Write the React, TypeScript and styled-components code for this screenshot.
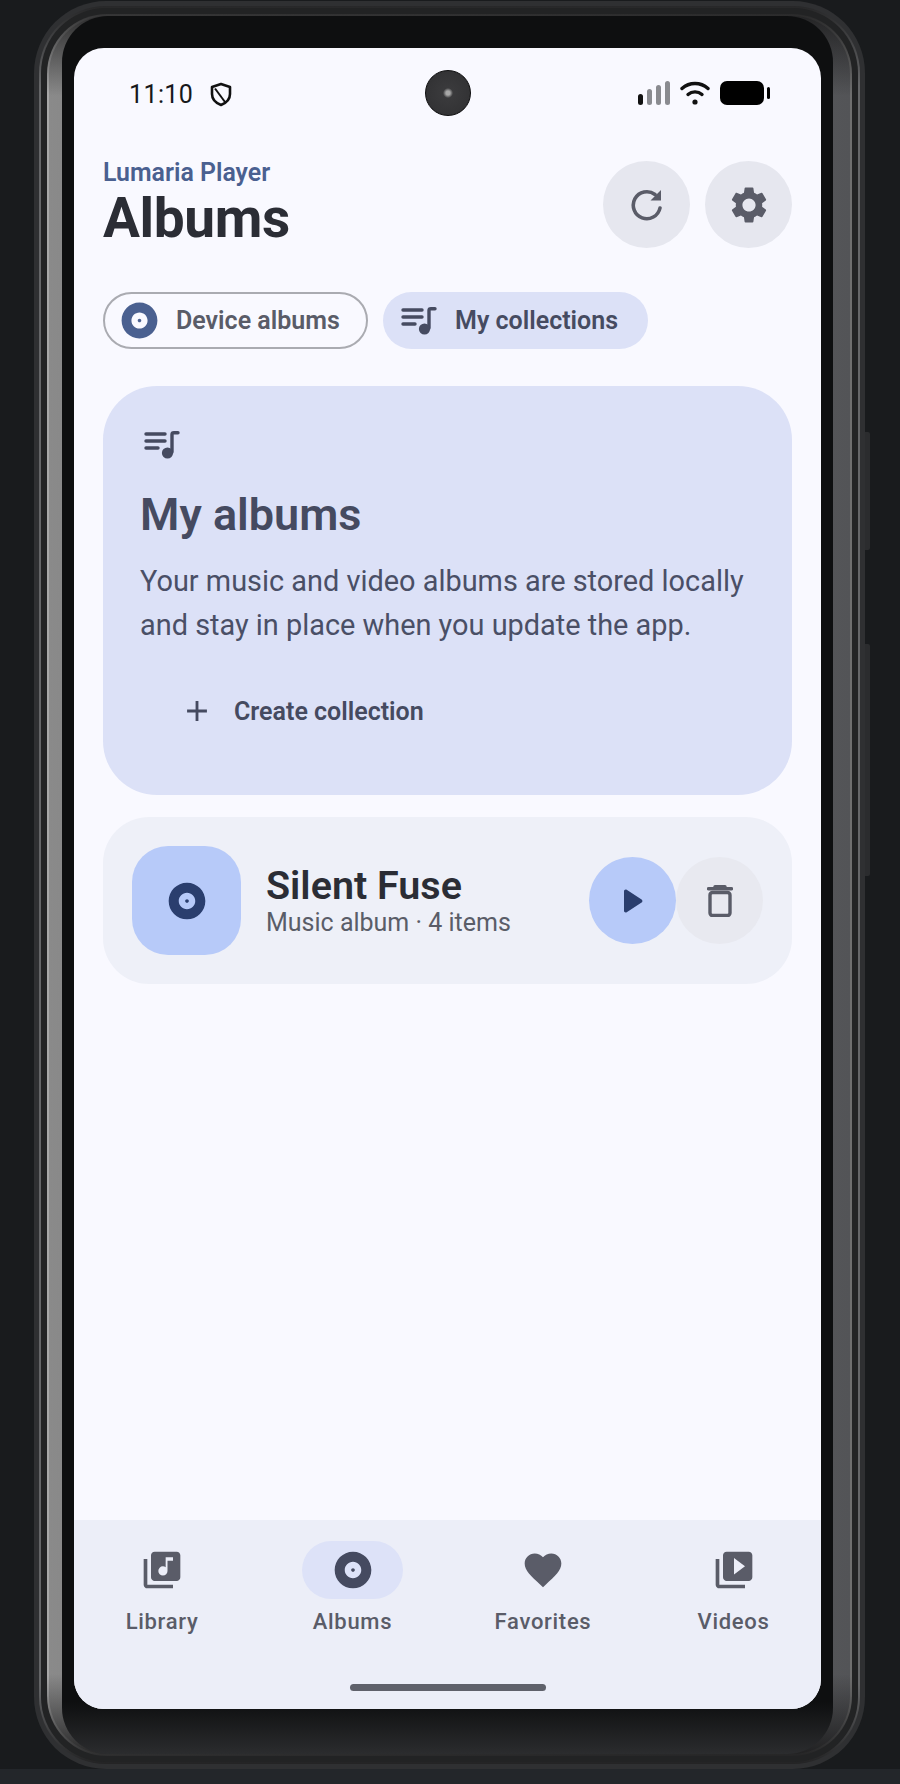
import React from "react";
import styled, { createGlobalStyle } from "styled-components";
import {
  MdAdd,
  MdAlbum,
  MdFavorite,
  MdLibraryMusic,
  MdSettings,
  MdVideoLibrary,
} from "react-icons/md";

const GlobalStyle = createGlobalStyle`
  html, body {
    margin: 0;
    padding: 0;
    background: #191b1d;
  }
  * {
    box-sizing: border-box;
  }
`;

// darkens the metal bands towards the top and bottom of the phone
const bandShade = `linear-gradient(
  to bottom,
  rgba(24, 24, 25, 0.8) 0,
  rgba(24, 24, 25, 0) 80px,
  rgba(24, 24, 25, 0) calc(100% - 80px),
  rgba(24, 24, 25, 0.85) 100%
)`;

const Stage = styled.div`
  width: 900px;
  height: 1784px;
  padding: 1px 35px 0 34px;
  overflow: hidden;
  font-family: Roboto, "Liberation Sans", sans-serif;
  background: linear-gradient(to bottom, #191b1d 1769px, #23262a 1769px);
`;

const Shell = styled.div`
  position: relative;
  width: 831px;
  height: 1768px;
  padding: 5px;
  border-radius: 72px;
  background: #2f3032;
`;

const SideKey = styled.span<{ $top: number; $height: number }>`
  position: absolute;
  right: -5px;
  top: ${({ $top }) => $top}px;
  width: 5px;
  height: ${({ $height }) => $height}px;
  border-radius: 0 2px 2px 0;
  background: #2b2c2e;
`;

const Rim = styled.div`
  height: 100%;
  padding: 2px;
  border-radius: 67px;
  background: ${bandShade}, #656668;
`;

const Gap = styled.div`
  height: 100%;
  padding: 6px;
  border-radius: 65px;
  background: #222324;
`;

const Edge = styled.div`
  height: 100%;
  padding: 2px;
  border-radius: 60px;
  background: ${bandShade}, linear-gradient(to right, #a8a8a8, #6e6e6e);
`;

const Bezel = styled.div`
  height: 100%;
  padding: 0 17px 0 13px;
  border-radius: 58px;
  background: ${bandShade}, linear-gradient(to right, #8a8a8a, #6a6a6a 50%, #535457);
`;

const Glass = styled.div`
  height: 100%;
  padding: 32px 12px 45px;
  border-radius: 46px;
  background: linear-gradient(to bottom, #0e0f10 97%, #2b2c2e);
`;

const Screen = styled.div`
  position: relative;
  display: flex;
  flex-direction: column;
  height: 100%;
  border-radius: 30px;
  overflow: hidden;
  background: #f9f9ff;
`;

const StatusBar = styled.div`
  display: flex;
  align-items: center;
  justify-content: space-between;
  height: 90px;
  padding: 0 51px 0 55px;
  color: #111;
`;

const StatusGroup = styled.div<{ $gap: number; $drop?: number }>`
  display: flex;
  align-items: center;
  gap: ${({ $gap }) => $gap}px;
  margin-top: ${({ $drop }) => $drop ?? 0}px;
`;

const Clock = styled.span`
  font-size: 25px;
  line-height: 30px;
  letter-spacing: 0.4px;
  color: #17181b;
`;

const Camera = styled.div`
  position: absolute;
  left: 351px;
  top: 22px;
  width: 46px;
  height: 46px;
  border-radius: 50%;
  border: 1.5px solid #0b0b0c;
  background: radial-gradient(circle at 50% 50%, #a8a8a8 0 2px, #3a3a3c 5px, #2f2f31 100%);
`;

const Content = styled.main`
  flex: 1;
  padding: 23px 29px 0;
`;

const Header = styled.header`
  display: flex;
  justify-content: space-between;
  align-items: flex-start;
`;

const TitleBlock = styled.div`
  display: flex;
  flex-direction: column;
`;

const Brand = styled.span`
  margin-bottom: 4px;
  font-size: 24.9px;
  font-weight: 600;
  line-height: 24px;
  color: #4a6090;
`;

const Title = styled.h1`
  margin: 0;
  font-size: 55px;
  font-weight: 700;
  line-height: 59px;
  letter-spacing: -0.4px;
  color: #2b2d35;
`;

const HeaderActions = styled.div`
  display: flex;
  gap: 15px;
`;

const RoundButton = styled.button<{ $tone: string }>`
  display: flex;
  align-items: center;
  justify-content: center;
  flex: none;
  width: 87px;
  height: 87px;
  padding: 0;
  border: none;
  border-radius: 50%;
  background: ${({ $tone }) => $tone};
  color: #5a5c68;
`;

const Tabs = styled.div`
  display: flex;
  gap: 15px;
  margin-top: 44px;
`;

const Tab = styled.button<{ $selected?: boolean }>`
  display: flex;
  align-items: center;
  gap: ${({ $selected }) => ($selected ? 18 : 15)}px;
  width: 265px;
  height: 57px;
  padding: 0 0 0 ${({ $selected }) => ($selected ? 18 : 13)}px;
  border-radius: 28.5px;
  border: ${({ $selected }) => ($selected ? "none" : "2px solid #aaabb1")};
  background: ${({ $selected }) => ($selected ? "#dce1f7" : "transparent")};
  color: ${({ $selected }) => ($selected ? "#464b61" : "#5a5c68")};
  font-family: inherit;
  font-size: 25px;
  font-weight: 600;
`;

const Hero = styled.section`
  display: flex;
  flex-direction: column;
  height: 409px;
  margin-top: 37px;
  padding: 45px 37px 0;
  border-radius: 54px;
  background: #dce1f7;
  color: #454a60;
`;

const HeroIcon = styled.span`
  display: flex;
  margin-left: 4px;
`;

const HeroTitle = styled.h2`
  margin: 28px 0 0;
  font-size: 45px;
  font-weight: 600;
  line-height: 56px;
  color: #454a60;
`;

const HeroText = styled.p`
  margin: 16px 0 0;
  font-size: 28.9px;
  font-weight: 400;
  line-height: 44px;
  color: #4a4f66;
`;

const CreateButton = styled.button`
  display: flex;
  align-items: center;
  gap: 20px;
  margin-top: 42px;
  padding: 0 0 0 40px;
  height: 44px;
  border: none;
  background: none;
  color: #454a60;
  font-family: inherit;
  font-size: 25px;
  font-weight: 600;
`;

const AlbumCard = styled.article`
  display: flex;
  align-items: center;
  height: 167px;
  margin-top: 22px;
  padding: 0 29px;
  border-radius: 46px;
  background: #eef0f8;
`;

const AlbumArt = styled.div`
  display: flex;
  align-items: center;
  justify-content: center;
  flex: none;
  width: 109px;
  height: 109px;
  border-radius: 36px;
  background: #b7caf9;
  color: #2a3e6e;
`;

const AlbumInfo = styled.div`
  display: flex;
  flex: 1;
  flex-direction: column;
  margin-left: 25px;
`;

const AlbumName = styled.span`
  font-size: 39.5px;
  font-weight: 600;
  line-height: 44px;
  color: #2b2d35;
`;

const AlbumMeta = styled.span`
  font-size: 25px;
  line-height: 30px;
  color: #5a5d68;
`;

const BottomNav = styled.nav`
  display: flex;
  flex-direction: column;
  height: 189px;
  background: #eceef8;
`;

const NavRow = styled.div`
  display: flex;
  gap: 30.5px;
  padding: 21px 0 0 8px;
`;

const NavItem = styled.a`
  display: flex;
  flex-direction: column;
  align-items: center;
  width: 160px;
  color: #5a5c68;
`;

const NavIcon = styled.span<{ $active?: boolean }>`
  display: flex;
  align-items: center;
  justify-content: center;
  width: 101px;
  height: 58px;
  border-radius: 29px;
  background: ${({ $active }) => ($active ? "#dde2f8" : "transparent")};
  color: ${({ $active }) => ($active ? "#454a60" : "#5a5c68")};
`;

const NavLabel = styled.span`
  margin-top: 8px;
  font-size: 22px;
  font-weight: 500;
  line-height: 30px;
  letter-spacing: 0.7px;
`;

const HomeBar = styled.div`
  align-self: center;
  width: 196px;
  height: 7px;
  margin-top: 47px;
  border-radius: 4px;
  background: #5f616b;
`;

const ShieldIcon = () => (
  <svg width="22" height="25" viewBox="0 0 22 25" fill="none" stroke="#111" strokeWidth="2.6" strokeLinejoin="round">
    <path d="M11 2 L20 5 V12 C20 17.5 16 21 11 23 C6 21 2 17.5 2 12 V5 Z" />
    <path d="M5 6.5 L15 20" strokeWidth="2" />
  </svg>
);

const SignalIcon = () => (
  <svg width="32" height="24" viewBox="0 0 32 24">
    <rect x="0" y="13" width="5" height="11" rx="2.5" fill="#111" />
    <rect x="9" y="8" width="5" height="16" rx="2.5" fill="#8a8b90" />
    <rect x="18" y="4" width="5" height="20" rx="2.5" fill="#8a8b90" />
    <rect x="27" y="0" width="5" height="24" rx="2.5" fill="#8a8b90" />
  </svg>
);

const WifiIcon = () => (
  <svg width="30" height="24" viewBox="0 0 30 24" fill="none" stroke="#111" strokeWidth="3.4" strokeLinecap="round">
    <path d="M2 7.5 C9.5 0.8 20.5 0.8 28 7.5" />
    <path d="M8 13.5 C12 10 18 10 22 13.5" />
    <circle cx="15" cy="21" r="2.6" fill="#111" stroke="none" />
  </svg>
);

const BatteryIcon = () => (
  <svg width="50" height="24" viewBox="0 0 50 24">
    <rect x="0" y="0" width="44" height="24" rx="7" fill="#000" />
    <rect x="47" y="6" width="3" height="12" rx="1.5" fill="#000" />
  </svg>
);

const RefreshIcon = () => (
  <svg width="34" height="34" viewBox="0 0 34 34" fill="none" stroke="currentColor" strokeWidth="3.6" strokeLinecap="round">
    <path d="M30 20 A13.5 13.5 0 1 1 25 6.5" />
    <path d="M31 2 V12.5 H20.5 Z" fill="currentColor" stroke="none" />
  </svg>
);

const QueueMusicIcon = () => (
  <svg width="36" height="28" viewBox="0 0 36 28" fill="none" stroke="currentColor" strokeWidth="3.4" strokeLinecap="round">
    <path d="M2 3 H21" />
    <path d="M2 10 H21" />
    <path d="M2 17 H14" />
    <path d="M28 21 V3.5 C28 2.5 29 1.8 30 1.8 H34" strokeWidth="3.4" />
    <circle cx="23.5" cy="22" r="5.6" fill="currentColor" stroke="none" />
  </svg>
);

const PlayIcon = () => (
  <svg width="20" height="24" viewBox="0 0 20 24" fill="#2a3e6e">
    <path d="M1 2.2 C1 0.8 2.5 0 3.7 0.8 L18.6 10.4 C19.7 11.1 19.7 12.9 18.6 13.6 L3.7 23.2 C2.5 24 1 23.2 1 21.8 Z" />
  </svg>
);

const TrashIcon = () => (
  <svg width="26" height="32" viewBox="0 0 26 32" fill="none" stroke="#5a5c68" strokeWidth="3.4" strokeLinecap="round" strokeLinejoin="round">
    <rect x="3" y="7.5" width="20" height="23" rx="2.5" />
    <path d="M1.5 3.8 H24.5" />
    <path d="M8 1.7 H18" />
  </svg>
);

const navItems = [
  { label: "Library", Icon: MdLibraryMusic },
  { label: "Albums", Icon: MdAlbum, active: true },
  { label: "Favorites", Icon: MdFavorite },
  { label: "Videos", Icon: MdVideoLibrary },
];

export default function App() {
  return (
    <Stage>
      <GlobalStyle />
      <Shell>
        <SideKey $top={431} $height={118} />
        <SideKey $top={643} $height={232} />
        <Rim>
          <Gap>
            <Edge>
              <Bezel>
                <Glass>
                  <Screen>
                    <Camera />
                    <StatusBar>
                      <StatusGroup $gap={17} $drop={3}>
                        <Clock>11:10</Clock>
                        <ShieldIcon />
                      </StatusGroup>
                      <StatusGroup $gap={10}>
                        <SignalIcon />
                        <WifiIcon />
                        <BatteryIcon />
                      </StatusGroup>
                    </StatusBar>
                    <Content>
                      <Header>
                        <TitleBlock>
                          <Brand>Lumaria Player</Brand>
                          <Title>Albums</Title>
                        </TitleBlock>
                        <HeaderActions>
                          <RoundButton $tone="#e6e7ef">
                            <RefreshIcon />
                          </RoundButton>
                          <RoundButton $tone="#e6e7ef">
                            <MdSettings size={44} />
                          </RoundButton>
                        </HeaderActions>
                      </Header>
                      <Tabs>
                        <Tab>
                          <MdAlbum size={43} color="#4a6090" />
                          Device albums
                        </Tab>
                        <Tab $selected>
                          <QueueMusicIcon />
                          My collections
                        </Tab>
                      </Tabs>
                      <Hero>
                        <HeroIcon>
                          <QueueMusicIcon />
                        </HeroIcon>
                        <HeroTitle>My albums</HeroTitle>
                        <HeroText>
                          Your music and video albums are stored locally and stay in place when you update the app.
                        </HeroText>
                        <CreateButton>
                          <MdAdd size={34} />
                          Create collection
                        </CreateButton>
                      </Hero>
                      <AlbumCard>
                        <AlbumArt>
                          <MdAlbum size={44} />
                        </AlbumArt>
                        <AlbumInfo>
                          <AlbumName>Silent Fuse</AlbumName>
                          <AlbumMeta>Music album · 4 items</AlbumMeta>
                        </AlbumInfo>
                        <RoundButton $tone="#b7caf9">
                          <PlayIcon />
                        </RoundButton>
                        <RoundButton $tone="#e8e9f0">
                          <TrashIcon />
                        </RoundButton>
                      </AlbumCard>
                    </Content>
                    <BottomNav>
                      <NavRow>
                        {navItems.map(({ label, Icon, active }) => (
                          <NavItem key={label}>
                            <NavIcon $active={active}>
                              <Icon size={44} />
                            </NavIcon>
                            <NavLabel>{label}</NavLabel>
                          </NavItem>
                        ))}
                      </NavRow>
                      <HomeBar />
                    </BottomNav>
                  </Screen>
                </Glass>
              </Bezel>
            </Edge>
          </Gap>
        </Rim>
      </Shell>
    </Stage>
  );
}
